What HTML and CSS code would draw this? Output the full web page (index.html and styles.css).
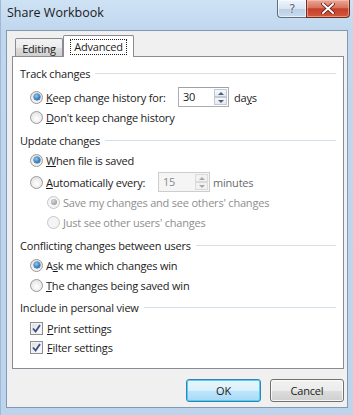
FILE: index.html
```
<!DOCTYPE html>
<html>
<head>
<meta charset="utf-8">
<link rel="stylesheet" href="styles.css">
</head>
<body>
<div class="window">
  <div class="titlebar">
    <span class="title">Share Workbook</span>
    <div class="caption-btns">
      <div class="cbtn help">?</div>
      <div class="cbtn close">
        <svg width="14" height="11" viewBox="0 0 14 11"><path d="M2 1 L12 10 M12 1 L2 10" stroke="#5a1a10" stroke-width="3.6" stroke-linecap="square"/><path d="M2 1 L12 10 M12 1 L2 10" stroke="#ffffff" stroke-width="2" stroke-linecap="square"/></svg>
      </div>
    </div>
  </div>
  <div class="client">
    <div class="tabs">
      <div class="tab">Editing</div>
      <div class="tab active"><span class="focus">Advanced</span></div>
    </div>
    <div class="panel">
      <div class="group-title"><span>Track changes</span><i class="line"></i></div>
      <div class="row mt4">
        <span class="radio checked"></span>
        <span class="label lbl-keep"><u>K</u>eep change history for:</span>
        <div class="spin spin-keep">
          <span class="spin-val">30</span>
          <span class="spin-btns"><span class="sb up"></span><span class="sb down"></span></span>
        </div>
        <span class="unit unit-days">da<u>y</u>s</span>
      </div>
      <div class="row">
        <span class="radio"></span>
        <span class="label"><u>D</u>on't keep change history</span>
      </div>

      <div class="group-title mt3"><span>Update changes</span><i class="line"></i></div>
      <div class="row">
        <span class="radio checked"></span>
        <span class="label"><u>W</u>hen file is saved</span>
      </div>
      <div class="row mt2">
        <span class="radio"></span>
        <span class="label lbl-auto"><u>A</u>utomatically every:</span>
        <div class="spin spin-auto disabled">
          <span class="spin-val">15</span>
          <span class="spin-btns"><span class="sb up"></span><span class="sb down"></span></span>
        </div>
        <span class="unit unit-min">minutes</span>
      </div>
      <div class="row indent disabled">
        <span class="radio checked"></span>
        <span class="label">Save my changes and see others' changes</span>
      </div>
      <div class="row indent disabled">
        <span class="radio"></span>
        <span class="label">Just see other users' changes</span>
      </div>

      <div class="group-title mt3"><span>Conflicting changes between users</span><i class="line"></i></div>
      <div class="row">
        <span class="radio checked"></span>
        <span class="label">A<u>s</u>k me which changes win</span>
      </div>
      <div class="row">
        <span class="radio"></span>
        <span class="label"><u>T</u>he changes being saved win</span>
      </div>

      <div class="group-title mt2"><span>Include in personal view</span><i class="line"></i></div>
      <div class="row mt1">
        <span class="check"><svg width="9" height="9" viewBox="0 0 9 9"><path d="M1 4.5 L3.6 7.5 L8 1" fill="none" stroke="#3b4f8c" stroke-width="1.8"/></svg></span>
        <span class="label"><u>P</u>rint settings</span>
      </div>
      <div class="row crow">
        <span class="check"><svg width="9" height="9" viewBox="0 0 9 9"><path d="M1 4.5 L3.6 7.5 L8 1" fill="none" stroke="#3b4f8c" stroke-width="1.8"/></svg></span>
        <span class="label"><u>F</u>ilter settings</span>
      </div>
    </div>
    <div class="buttons">
      <div class="btn default">OK</div>
      <div class="btn cancel">Cancel</div>
    </div>
  </div>
</div>
</body>
</html>
```

FILE: styles.css
```
* { box-sizing: border-box; }
html, body { margin: 0; padding: 0; }
body {
  width: 353px;
  height: 415px;
  overflow: hidden;
  font-family: "Open Sans", "Noto Sans", sans-serif;
  font-size: 11px;
  letter-spacing: -0.2px;
  color: #1b1b1b;
}
u { text-decoration: underline; text-underline-offset: 1px; }

.window {
  width: 353px;
  height: 415px;
  background: linear-gradient(180deg, #cfe2f5 0px, #c0d7ee 30px, #bcd4ec 100%);
  border-left: 1px solid #9fb9d6;
}

.titlebar {
  display: flex;
  justify-content: space-between;
  align-items: flex-start;
  height: 30px;
  padding: 0 3px 0 6px;
}
.title {
  margin-top: 4px;
  line-height: 18px;
  font-size: 12.5px;
  letter-spacing: 0;
  color: #1a1a1a;
}
.caption-btns { display: flex; }
.cbtn {
  height: 18px;
  display: flex;
  align-items: center;
  justify-content: center;
  border: 1px solid #5d6f86;
  border-top: none;
}
.help {
  width: 29px;
  border-radius: 0 0 0 4px;
  border-right: none;
  background: linear-gradient(180deg, #eef4fb 0%, #d9e5f3 50%, #bccee3 51%, #c9dbee 100%);
  font-family: "DejaVu Sans", sans-serif;
  font-size: 12px;
  color: #5c6b80;
  text-shadow: 0 0 2px #fff;
  box-shadow: inset 0 0 0 1px rgba(255,255,255,0.6);
}
.close {
  width: 44px;
  border-color: #6e2b1e;
  border-radius: 0 0 4px 0;
  background: linear-gradient(180deg, #e9a896 0%, #d9735c 45%, #c4402b 52%, #d3573f 100%);
  box-shadow: inset 0 0 0 1px rgba(255,210,200,0.5);
}

.client {
  margin: 0 5px;
  height: 378px;
  background: #f0f0f0;
  border: 1px solid #8398b1;
  padding: 4px 3px 0 5px;
}

.tabs {
  display: flex;
  align-items: flex-end;
  height: 22px;
  margin-bottom: -1px;
  padding-left: 3px;
  position: relative;
  z-index: 1;
}
.tab {
  height: 18px;
  margin-bottom: 1px;
  width: 48px;
  border: 1px solid #898c95;
  border-bottom: none;
  background: linear-gradient(180deg, #f3f3f3 0%, #ebebeb 50%, #dddddd 51%, #cfcfcf 100%);
  display: flex;
  align-items: center;
  justify-content: center;
  padding-top: 1px;
  border-radius: 2px 2px 0 0;
}
.tab.active {
  height: 22px;
  margin-bottom: 0;
  width: 71px;
  background: #ffffff;
  padding-top: 0;
}
.focus {
  outline: 1px dotted #222;
  outline-offset: 0;
  padding: 0 3px;
  line-height: 14px;
}

.panel {
  height: 313px;
  background: #ffffff;
  border: 1px solid #898c95;
  padding-top: 6px;
}

.group-title {
  display: flex;
  align-items: center;
  height: 20px;
  padding-left: 7px;
  padding-right: 7px;
}
.group-title .line {
  flex: 1;
  height: 1px;
  margin-left: 5px;
  background: #d5dfe5;
}

.row {
  display: flex;
  align-items: center;
  height: 20px;
  padding-left: 17px;
}
.row.crow { height: 19px; }
.row.indent { padding-left: 34px; }
.mt1 { margin-top: 1px; }
.mt2 { margin-top: 2px; }
.mt3 { margin-top: 3px; }
.mt4 { margin-top: 4px; }

.radio {
  width: 13px;
  height: 13px;
  border-radius: 50%;
  border: 1px solid #9a9a9a;
  background: radial-gradient(circle at 50% 60%, #ffffff 0%, #f1f1f1 40%, #d9d9d9 100%);
  margin-right: 3px;
  flex: none;
  display: flex;
  align-items: center;
  justify-content: center;
}
.radio.checked::after {
  content: "";
  width: 6px;
  height: 6px;
  border-radius: 50%;
  background: radial-gradient(circle at 40% 35%, #8fd0fb 0%, #3f8ed4 45%, #1d548f 90%);
  box-shadow: 0 0 0 0.5px #24507d;
}
.row.disabled { color: #8e8e8e; }
.row.disabled .radio {
  border-color: #c6c6c6;
  background: #f4f4f4;
}
.row.disabled .radio.checked::after {
  background: radial-gradient(circle at 40% 35%, #d8d8d8 0%, #a9a9a9 60%, #8c8c8c 100%);
  box-shadow: none;
}

.check {
  width: 13px;
  height: 13px;
  border: 1px solid #8e8f8f;
  background: linear-gradient(135deg, #dcdcdc 0%, #f6f6f6 70%, #ffffff 100%);
  margin-right: 4px;
  flex: none;
  display: flex;
  align-items: center;
  justify-content: center;
  box-shadow: inset 0 0 0 1px #f3f3f3;
}

.label { white-space: nowrap; }
.lbl-keep { width: 132px; flex: none; }
.lbl-auto { width: 112px; flex: none; }

.spin {
  display: flex;
  height: 20px;
  border: 1px solid #abadb3;
  border-top-color: #9ea1a8;
  background: #ffffff;
  flex: none;
}
.spin-keep { width: 51px; }
.spin-auto { width: 52px; }
.spin-val {
  flex: 1;
  padding-left: 4px;
  line-height: 18px;
}
.spin-btns {
  width: 14px;
  display: flex;
  flex-direction: column;
  padding: 1px 1px 1px 0;
}
.sb {
  flex: 1;
  border: 1px solid #c1c9d4;
  background: linear-gradient(180deg, #f7f9fb, #e4eaf1);
  display: flex;
  align-items: center;
  justify-content: center;
}
.sb.up::after {
  content: "";
  border-left: 3px solid transparent;
  border-right: 3px solid transparent;
  border-bottom: 3px solid #4b5d7f;
}
.sb.down::after {
  content: "";
  border-left: 3px solid transparent;
  border-right: 3px solid transparent;
  border-top: 3px solid #4b5d7f;
}
.spin.disabled {
  border-color: #cdcdcd;
  background: #f5f5f5;
  color: #8a8a8a;
}
.spin.disabled .sb {
  border-color: #dadada;
  background: #f2f2f2;
}
.spin.disabled .sb.up::after { border-bottom-color: #a8a8a8; }
.spin.disabled .sb.down::after { border-top-color: #a8a8a8; }

.unit-days { margin-left: 5px; }
.unit-min { margin-left: 3px; color: #6a6a6a; }

.buttons {
  display: flex;
  justify-content: flex-end;
  gap: 9px;
  margin-top: 10px;
}
.btn {
  height: 23px;
  display: flex;
  align-items: center;
  justify-content: center;
  border: 1px solid #707070;
  border-radius: 3px;
  background: linear-gradient(180deg, #f2f2f2 0%, #ebebeb 50%, #dddddd 51%, #cfcfcf 100%);
  box-shadow: inset 0 0 0 1px rgba(255,255,255,0.8);
}
.btn.default {
  width: 75px;
  border-color: #3c7fb1;
  background: linear-gradient(180deg, #eaf6fd 0%, #d9f0fc 50%, #bee6fd 51%, #a7d9f5 100%);
  box-shadow: inset 0 0 0 1px #48d2fc;
}
.btn.cancel { width: 74px; }
```
